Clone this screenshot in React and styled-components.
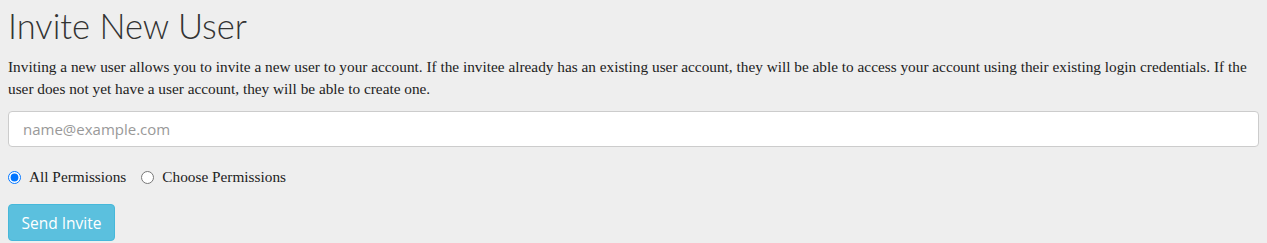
import React from "react";
import styled, { createGlobalStyle } from "styled-components";

const Global = createGlobalStyle`
  html, body { margin: 0; padding: 0; background: #eeeeee; }
  body { font-family: "Liberation Serif", "Times New Roman", serif; }
`;

const Page = styled.div`
  padding: 6px 8px 0 8px;
  display: flex;
  flex-direction: column;
`;

const Title = styled.h1`
  margin: 0;
  font-family: "Lato", "Open Sans", sans-serif;
  font-weight: 300;
  font-size: 34.5px;
  line-height: 40px;
  color: #333333;
`;

const Intro = styled.p`
  margin: 10px 0 0 0;
  font-size: 15.3px;
  line-height: 22px;
  color: #222222;
`;

const Input = styled.input`
  margin-top: 11px;
  box-sizing: border-box;
  width: 100%;
  height: 36px;
  padding: 0 14px;
  border: 1px solid #cccccc;
  border-radius: 4px;
  background: #ffffff;
  font-family: "Open Sans", sans-serif;
  font-size: 15px;
  color: #555;
  outline: none;
  &::placeholder { color: #999999; }
`;

const RadioRow = styled.div`
  margin-top: 20px;
  display: flex;
  align-items: center;
  gap: 15px;
  height: 20px;
`;

const RadioLabel = styled.label`
  display: flex;
  align-items: center;
  gap: 8px;
  font-size: 15.3px;
  color: #222;
`;

const Radio = styled.input`
  margin: 0;
  width: 13px;
  height: 13px;
  accent-color: #0075ff;
`;

const Button = styled.button`
  margin-top: 17px;
  align-self: flex-start;
  height: 37px;
  width: 107px;
  padding: 0;
  border: 1px solid #46b8da;
  border-radius: 4px;
  background: #5bc0de;
  color: #ffffff;
  font-family: "Open Sans", sans-serif;
  font-size: 15.5px;
`;

export default function App() {
  return (
    <>
      <Global />
      <Page>
        <Title>Invite New User</Title>
        <Intro>
          Inviting a new user allows you to invite a new user to your account. If the invitee already has an existing user account, they will be able to access your account using their existing login credentials. If the user does not yet have a user account, they will be able to create one.
        </Intro>
        <Input type="email" placeholder="name@example.com" />
        <RadioRow>
          <RadioLabel>
            <Radio type="radio" name="perm" defaultChecked /> All Permissions
          </RadioLabel>
          <RadioLabel>
            <Radio type="radio" name="perm" /> Choose Permissions
          </RadioLabel>
        </RadioRow>
        <Button>Send Invite</Button>
      </Page>
    </>
  );
}
